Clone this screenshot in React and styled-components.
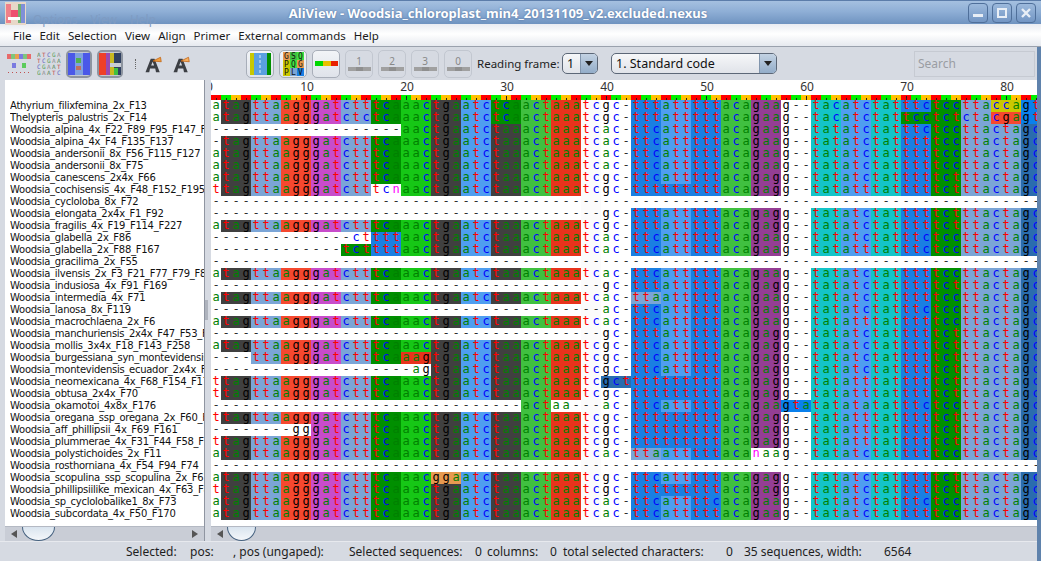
import React from "react";
import styled, { createGlobalStyle, css } from "styled-components";

const cellWidth = 10;
const rowHeight = 12;

const GlobalStyle = createGlobalStyle`
  html, body {
    margin: 0;
    padding: 0;
    width: 1041px;
    height: 561px;
    overflow: hidden;
    background: #d6dae2;
    font-family: "Noto Sans", sans-serif;
  }
`;

const aminoColors = {
  stop: "#404040",
  L: "#7ba5d6",
  R: "#f5482f",
  D: "#c84ccb",
  S: "#008f00",
  N: "#16c716",
  K: "#e8331c",
  G: "#e69a50",
  I: "#4f9ef0",
  T: "#40c040",
  F: "#1a7fe2",
  E: "#943e94",
  Y: "#14c4c8",
  P: "#cbc800",
  V: "#0a80ec",
  A: "#2a6cae"
};

const codonTable = {
  tag: "stop", tga: "stop", taa: "stop",
  tta: "L", cta: "L", ctt: "L", ctc: "L",
  agg: "R", cga: "R",
  gat: "D",
  tca: "S", tcc: "S", tct: "S",
  aac: "N",
  aag: "K", aaa: "K",
  gga: "G",
  atc: "I", att: "I", ata: "I",
  act: "T", aca: "T",
  ttt: "F", ttc: "F",
  gag: "E", gaa: "E",
  tac: "Y", tat: "Y",
  cca: "P",
  gta: "V",
  gct: "A"
};

const baseColors = {
  a: "#008000",
  t: "#ff0000",
  c: "#0000ff",
  g: "#000000",
  n: "#ff00ff",
  "-": "#303030"
};

const H = "tag tta agg gat ctt tca aac tga atc taa act aaa";
const dashes = n => "-".repeat(n);

const tailF = "ttc att ttt aca gaa g-- tat atc tat ttt tcc tta cta gct";
const tailG = "ttc att ttt aca gag g-- tat atc tat ttt tct tta cta gct";
const tailT = "ttt att ttt aca gag g-- tat atc tat ttt tct tta cta gct";
const tailU = "ttt ttt ttt aca gag g-- tat att tat ttt tct tta cta gct";

const rows = [
  ["Athyrium_filixfemina_2x_F13", "a" + "tag tta agg gat ctt tca aac tga atc tca act aaa" + "tcgc-" + "ttt att ttt aca gaa g-- tac atc tat ttc tcc tta cca gta"],
  ["Thelypteris_palustris_2x_F14", "a" + "tag tta agg gat ctc tca aac tga atc tca act aaa" + "tcgc-" + "ttt att ttt aca gaa g-- tac atc tat tcc tct cta cga gta"],
  ["Woodsia_alpina_4x_F22_F89_F95_F147_F205", dashes(19) + "aac tga atc taa act aaa" + "tcac-" + "ttc att ttt aca gaa g-- tat atc tat ttc tcc tta cta gct"],
  ["Woodsia_alpina_4x_F4_F135_F137", "-" + H + "tcac-" + tailF],
  ["Woodsia_andersonii_8x_F56_F115_F127", "a" + H + "tcac-" + tailF],
  ["Woodsia_andersonii_8x_F75", "a" + H + "tcac-" + tailF],
  ["Woodsia_canescens_2x4x_F66", "a" + H + "tcgc-" + tailG],
  ["Woodsia_cochisensis_4x_F48_F152_F195_F201", "t" + "tag tta agg gat ctt tcn aac tga atc taa act aaa" + "tcgc-" + tailU],
  ["Woodsia_cycloloba_8x_F72", dashes(84)],
  ["Woodsia_elongata_2x4x_F1_F92", dashes(39) + "gc-" + tailT],
  ["Woodsia_fragilis_4x_F19_F114_F227", "a" + H + "tcgc-" + tailT],
  ["Woodsia_glabella_2x_F86", dashes(14) + "ct" + "ttt aac tga atc taa act aaa" + "tcac-" + "ttc att ttt aca gaa g-- tat atc tat ttc tcc tta cta gct"],
  ["Woodsia_glabella_2x_F88_F167", dashes(13) + "tct ttt aac tga atc taa act aaa" + "tcac-" + "ttc att ttt aca gaa g-- tat att tat ttc tcc tta cta gct"],
  ["Woodsia_gracilima_2x_F55", dashes(84)],
  ["Woodsia_ilvensis_2x_F3_F21_F77_F79_F81", "a" + H + "tcac-" + tailF],
  ["Woodsia_indusiosa_4x_F91_F169", dashes(39) + "gc-" + tailT],
  ["Woodsia_intermedia_4x_F71", "a" + H + "tcac-" + "tta att ttt aca gaa g-- tat atc tat ttt tcc tta cta gct"],
  ["Woodsia_lanosa_8x_F119", dashes(39) + "ac-" + "ttc att ttt aca gaa g-- tat atc tat ttc tcc tta cta gct"],
  ["Woodsia_macrochlaena_2x_F6", "a" + H + "tcac-" + "ttc att ttt aca gaa g-- tat att tat ttt tcc tta cta gct"],
  ["Woodsia_manchuriensis_2x4x_F47_F53_F60", dashes(39) + "gc-" + tailT],
  ["Woodsia_mollis_3x4x_F18_F143_F258", "a" + H + "tcgc-" + tailG],
  ["Woodsia_burgessiana_syn_montevidensis_F3", "----" + "tta agg gat ctt tca aag tga atc taa act aaa" + "tcgc-" + tailG],
  ["Woodsia_montevidensis_ecuador_2x4x_F90", dashes(20) + "ag" + "tga atc taa act aaa" + "tcgc-" + tailG],
  ["Woodsia_neomexicana_4x_F68_F154_F171", "t" + H + "tcgct" + tailU],
  ["Woodsia_obtusa_2x4x_F70", "t" + H + "tcgc-" + tailU],
  ["Woodsia_okamotoi_4x8x_F176", dashes(31) + "act" + "aa---" + "ac-" + "ttc att ttt aca gaa gta tat ata tat ttc tcc tta cta gct"],
  ["Woodsia_oregana_ssp_oregana_2x_F60_F77", "t" + H + "tcgc-" + tailU],
  ["Woodsia_aff_phillipsii_4x_F69_F161", dashes(8) + "gg" + "gat ctt tca aac tga atc taa act aaa" + "tcgc-" + tailU],
  ["Woodsia_plummerae_4x_F31_F44_F58_F60", "t" + H + "tcgc-" + tailU],
  ["Woodsia_polystichoides_2x_F11", "a" + H + "tcac-" + "tta att ttt aca naa g-- tat atc tat ttt tcc tta cta gct"],
  ["Woodsia_rosthorniana_4x_F54_F94_F74", dashes(84)],
  ["Woodsia_scopulina_ssp_scopulina_2x_F61", "a" + "tag tta agg gat ctt tca aac gga atc taa act aaa" + "tcgc-" + tailG],
  ["Woodsia_phillipsiilike_mexican_4x_F63_F80", "t" + H + "tcgc-" + "ttt ttt ttt aca gag g-- tat atc tat ttt tct tta cta gct"],
  ["Woodsia_sp_cyclolobalike1_8x_F73", "a" + H + "tcac-" + "ttc att ttc aca gaa g-- tat atc tat ttc tcc tta cta gct"],
  ["Woodsia_subcordata_4x_F50_F170", "a" + H + "tcac-" + tailF]
];

// column groups: col 0 alone, codons, two loose columns, then the rest in codons
const splitColumns = seq => {
  const s = seq.replace(/ /g, "");
  const groups = [[s[0], false]];
  for (let i = 1; i < 37; i += 3) groups.push([s.slice(i, i + 3), true]);
  groups.push([s[37], false, true]);
  groups.push([s[38], false, true]);
  groups.push([s.slice(39, 42), true]);
  for (let i = 42; i < 84; i += 3) groups.push([s.slice(i, i + 3), true]);
  return groups;
};

const rulerColors = ["#ff0000", "#00ee00", "#ffc000"];

const Window = styled.div`
  width: 1041px;
  height: 561px;
  display: flex;
  flex-direction: column;
  overflow: hidden;
  background: #d6dae2;
  position: relative;
`;

const TitleBar = styled.div`
  height: 24px;
  flex: none;
  position: relative;
  display: flex;
  align-items: center;
  justify-content: center;
  background: linear-gradient(#a5c0e0, #8fafd6 45%, #6f93c0);
  border-top: 1px solid #5c7daa;
  box-sizing: border-box;
  color: #fff;
  font-weight: bold;
  font-size: 13px;
  padding-right: 45px;
  text-shadow: 0 0 2px #4a6a96;
`;

const AppIcon = styled.svg`
  position: absolute;
  left: 5px;
  top: 1px;
  width: 21px;
  height: 23px;
`;

const GhostMenu = styled.div`
  position: absolute;
  left: 33px;
  top: 10px;
  display: flex;
  gap: 13px;
  font-size: 12px;
  font-weight: normal;
  color: #7e9bc2;
  text-shadow: none;
`;

const WindowButtons = styled.div`
  position: absolute;
  right: 5px;
  top: 2px;
  display: flex;
  gap: 4px;
`;

const WindowButton = styled.div`
  width: 18px;
  height: 18px;
  border: 1px solid #4f6f9a;
  border-radius: 4px;
  background: linear-gradient(#9cb9dc, #7396c4);
  display: flex;
  align-items: center;
  justify-content: center;
`;

const Body = styled.div`
  flex: 1;
  display: flex;
  flex-direction: column;
  min-height: 0;
  padding: 0 4px 0 0;
  background: linear-gradient(90deg, #d6dae2 1037px, #5f82ac 1037px);
`;

const MenuBar = styled.div`
  height: 23px;
  flex: none;
  box-sizing: border-box;
  display: flex;
  align-items: center;
  padding-left: 13px;
  gap: 8px;
  margin-right: -4px;
  background: linear-gradient(#e9ecf2, #ffffff 45%, #e6e9ef);
  border-bottom: 1px solid #9aa1ad;
  font-size: 11.5px;
  color: #1a1a1a;
`;

const ToolBar = styled.div`
  height: 33px;
  flex: none;
  display: flex;
  align-items: center;
  padding-left: 7px;
`;

const PlainIcon = styled.svg`
  width: ${p => p.$size || 24}px;
  height: ${p => p.$size || 24}px;
  margin-right: ${p => p.$gap || 5}px;
  flex: none;
`;

const buttonFace = css`
  box-sizing: border-box;
  border-radius: 5px;
  border: 1px solid #a8aeb9;
  background: linear-gradient(#f2f4f7, #dfe3ea);
`;

const ToolButton = styled.div`
  ${buttonFace}
  width: ${p => p.$w || 27}px;
  height: 28px;
  flex: none;
  margin-right: ${p => p.$gap || 5}px;
  display: flex;
  align-items: center;
  justify-content: center;
  ${p => p.$dim && css`
    background: #d6dae2;
    border-color: #c2c7d0;
  `}
  ${p => p.$on && css`
    border: 2px solid #8d949f;
    background: #c3c8d2;
    width: 26px;
  `}
`;

const Divider = styled.div`
  width: 2px;
  height: 10px;
  margin: 0 6px 0 7px;
  border-left: 1px dotted #666;
`;

const FrameNum = styled.div`
  display: flex;
  flex-direction: column;
  align-items: center;
  color: #888;
  font-size: 10px;
  line-height: 9px;
  width: 100%;
  &::after {
    content: "";
    display: block;
    width: 23px;
    height: 4px;
    margin-top: 1px;
    background: linear-gradient(90deg, #a0a0a0 34%, #8f8f8f 34%, #8f8f8f 66%, #a0a0a0 66%);
  }
`;

const FieldLabel = styled.div`
  font-size: 11.5px;
  color: #1e1e1e;
  width: 85px;
  flex: none;
  white-space: nowrap;
`;

const Combo = styled.div`
  box-sizing: border-box;
  width: ${p => p.$w}px;
  height: 21px;
  flex: none;
  margin-right: ${p => p.$gap}px;
  border: 1px solid #5c6777;
  border-radius: 5px;
  background: linear-gradient(#f6f7f9, #e0e3e9);
  display: flex;
  align-items: center;
  font-size: 12.5px;
  color: #111;
  padding-left: 4px;
  overflow: hidden;
`;

const ComboText = styled.div`
  flex: 1;
  white-space: nowrap;
`;

const ComboArrow = styled.div`
  width: 16px;
  height: 100%;
  flex: none;
  background: linear-gradient(#c3d2e3, #93adc9);
  border-left: 1px solid #8195ad;
  display: flex;
  align-items: center;
  justify-content: center;
  &::after {
    content: "";
    border-left: 4px solid transparent;
    border-right: 4px solid transparent;
    border-top: 5px solid #222;
  }
`;

const SearchBox = styled.div`
  box-sizing: border-box;
  width: 121px;
  height: 26px;
  flex: none;
  border: 1px solid #c6cad2;
  background: #d6dae2;
  color: #9a9da3;
  font-size: 12px;
  padding: 3px 3px;
`;

const Panes = styled.div`
  flex: 1;
  min-height: 0;
  display: flex;
  padding-left: 5px;
`;

const NamePane = styled.div`
  width: 199px;
  flex: none;
  display: flex;
  flex-direction: column;
  border-right: 1px solid #8f95a1;
`;

const Names = styled.div`
  flex: 1;
  min-height: 0;
  background: #fff;
  padding: 20px 0 0 5px;
  overflow: hidden;
`;

const NameRow = styled.div`
  height: ${rowHeight}px;
  line-height: ${rowHeight}px;
  font-family: "DejaVu Sans", sans-serif;
  font-size: 10px;
  letter-spacing: -0.27px;
  color: #111;
  white-space: nowrap;
  overflow: hidden;
`;

const Splitter = styled.div`
  width: 6px;
  flex: none;
  background: #d6dae2;
  position: relative;
  &::after {
    content: "";
    position: absolute;
    left: 0;
    top: 220px;
    width: 3px;
    height: 20px;
    background: #aeb3bd;
  }
`;

const AlignPane = styled.div`
  flex: 1;
  min-width: 0;
  display: flex;
  flex-direction: column;
  border-left: 0;
`;

const Ruler = styled.div`
  height: 20px;
  flex: none;
  background: #fff;
  display: flex;
  flex-direction: column;
  overflow: hidden;
`;

const RulerLabels = styled.div`
  height: 15px;
  display: flex;
  font-size: 12px;
  line-height: 14px;
  color: #333;
`;

const RulerLabel = styled.div`
  width: ${p => p.$w}px;
  flex: none;
  text-align: ${p => p.$align || "center"};
  margin-left: ${p => p.$ml || 0}px;
`;

const Ticks = styled.div`
  height: 5px;
  display: flex;
`;

const Tick = styled.div`
  width: ${cellWidth}px;
  flex: none;
  height: 5px;
  position: relative;
  &::after {
    content: "";
    position: absolute;
    left: 5px;
    bottom: 0;
    width: 1px;
    height: ${p => (p.$major ? 4 : 2)}px;
    background: #222;
  }
`;

const Grid = styled.div`
  flex: 1;
  min-height: 0;
  background: #fff;
  overflow: hidden;
`;

const SeqRow = styled.div`
  height: ${rowHeight}px;
  display: flex;
`;

const Codon = styled.div`
  display: flex;
  flex: none;
  height: ${rowHeight}px;
  background: ${p => p.$bg};
`;

const Base = styled.span`
  width: ${cellWidth}px;
  flex: none;
  height: ${rowHeight}px;
  line-height: 11px;
  text-align: center;
  font-family: "DejaVu Sans Mono", monospace;
  font-size: 12px;
  color: ${p => baseColors[p.$c]};
`;

const Scroller = styled.div`
  height: 15px;
  flex: none;
  position: relative;
  overflow: hidden;
  background: #c9cdd6;
  border-top: 1px solid #b4b9c3;
  box-sizing: border-box;
  display: flex;
  align-items: center;
  justify-content: space-between;
  padding: 0 6px;
`;

const Arrow = styled.div`
  width: 0;
  height: 0;
  border-top: 4px solid transparent;
  border-bottom: 4px solid transparent;
  ${p => (p.$right ? "border-left: 6px solid #555;" : "border-right: 6px solid #555;")}
`;

const Thumb = styled.div`
  position: absolute;
  left: ${p => p.$left}px;
  top: -14px;
  width: ${p => p.$w}px;
  height: 28px;
  box-sizing: border-box;
  border: 1px solid #45617f;
  border-radius: 50%;
  background: linear-gradient(#b9cde0, #dfe8f1 60%, #f4f7fa);
`;

const StatusBar = styled.div`
  height: 19px;
  flex: none;
  display: flex;
  align-items: center;
  padding-left: 126px;
  font-size: 12px;
  color: #1e1e1e;
  white-space: nowrap;
  border-top: 1px solid #e7e9ee;
`;

const StatusItem = styled.div`
  width: ${p => p.$w}px;
  flex: none;
`;

const ViewIconOne = () => (
  <PlainIcon viewBox="0 0 24 24" $gap={6}>
    {[0, 4, 8, 12, 16, 20].map((x, i) => (
      <rect key={x} x={x} y="2" width="4" height="5" fill={["#e86a6a", "#7dc67d", "#e8a050", "#7a7ae0", "#7dc67d", "#e86a6a"][i]} />
    ))}
    <rect x="5" y="11" width="4" height="5" fill="#7a7ae0" />
    <rect x="15" y="11" width="4" height="5" fill="#5ccb5c" />
    {[1, 5, 9, 13, 17, 21].map(x => (
      <rect key={x} x={x} y="20" width="1" height="1" fill="#c05050" />
    ))}
  </PlainIcon>
);

const ViewIconTwo = () => (
  <PlainIcon viewBox="0 0 24 24" $gap={5}>
    {[2, 8, 14, 20].map((y, r) =>
      [0, 5, 10, 15, 20].map((x, i) => (
        <text key={x + "-" + y} x={x} y={y + 3} fontSize="6" fontFamily="DejaVu Sans Mono" fill={["#5a8a5a", "#c05050", "#6060c0", "#5aa05a", "#909090"][(i + r) % 5]}>
          {"ATCGA"[(i + r) % 5]}
        </text>
      ))
    )}
  </PlainIcon>
);

const ViewIconBlue = () => (
  <svg width="22" height="22" viewBox="0 0 22 22">
    <rect width="22" height="22" fill="#4a58e8" />
    <rect x="7" width="8" height="22" fill="#7fa0e0" />
    <rect x="8" y="5" width="5" height="5" fill="#52b052" />
    <rect x="8" y="13" width="5" height="4" fill="#c07060" />
  </svg>
);

const ViewIconRed = () => (
  <svg width="22" height="22" viewBox="0 0 22 22">
    <rect width="7" height="22" fill="#ee4028" />
    <rect x="7" width="4" height="22" fill="#9a48b0" />
    <rect x="11" width="4" height="22" fill="#c8b820" />
    <rect x="15" width="7" height="22" fill="#304060" />
    <rect x="11" y="10" width="11" height="4" fill="#c8ccd4" />
    <rect x="15" y="15" width="4" height="7" fill="#40c040" />
  </svg>
);

const FontIcon = ({ fill, gap }) => (
  <PlainIcon viewBox="0 0 24 24" $gap={gap} $size={18}>
    <path d="M2 23 L9 5 L14 5 L21 23 L16 23 L15 18 L8 18 L7 23 Z M9.5 14 L13.5 14 L11.5 9 Z" fill="#3c3f44" fillRule="evenodd" />
    <path d="M12 8 L22 3 L23 9 Z" fill={fill} stroke="#c06010" strokeWidth="1" />
  </PlainIcon>
);

const ColumnIcon = () => (
  <svg width="21" height="22" viewBox="0 0 21 22">
    <rect width="4" height="22" fill="#c8c800" />
    <rect x="4" width="13" height="22" fill="#5aa0e0" />
    <rect x="17" width="4" height="22" fill="#008f00" />
    <path d="M10 2v18" stroke="#ddeeff" strokeWidth="1" strokeDasharray="3 2" />
  </svg>
);

const AminoIcon = () => (
  <svg width="21" height="24" viewBox="0 0 21 24">
    {[
      ["G", "#e69a50"], ["S", "#40c040"], ["Q", "#40e040"],
      ["P", "#cbc800"], ["Q", "#40e040"], ["G", "#e69a50"],
      ["P", "#cbc800"], ["L", "#7ba5d6"], ["V", "#1a7fe2"]
    ].map(([t, f], i) => (
      <g key={i}>
        <rect x={(i % 3) * 7} y={Math.floor(i / 3) * 8} width="7" height="8" fill={f} />
        <text x={(i % 3) * 7 + 1} y={Math.floor(i / 3) * 8 + 7} fontSize="8" fontFamily="DejaVu Sans Mono" fill="#111">{t}</text>
      </g>
    ))}
  </svg>
);

const TranslateIcon = () => (
  <svg width="23" height="6" viewBox="0 0 23 6">
    <rect width="8" height="5" fill="#00d800" />
    <rect x="8" width="8" height="5" fill="#e8c000" />
    <rect x="16" width="7" height="5" fill="#e82000" />
  </svg>
);

export default function App() {
  const ticks = [];
  for (let i = 0; i < 83; i++) ticks.push(i);

  return (
    <Window>
      <GlobalStyle />
      <TitleBar>
        <AppIcon viewBox="0 0 21 23">
          <rect width="21" height="23" fill="#e8d8c8" />
          <rect x="1" y="2" width="5" height="19" fill="#f08088" />
          <rect x="6" y="8" width="7" height="7" fill="#ee5070" />
          <rect x="13" y="2" width="3" height="19" fill="#70b070" />
          <rect x="16" y="2" width="4" height="19" fill="#8090d8" />
          <rect x="3" y="15" width="12" height="3" fill="#fff" />
        </AppIcon>
        <GhostMenu>
          <span>Options</span>
          <span>View</span>
          <span>Help</span>
        </GhostMenu>
        AliView - Woodsia_chloroplast_min4_20131109_v2.excluded.nexus
        <WindowButtons>
          <WindowButton>
            <svg width="10" height="10" viewBox="0 0 10 10"><rect y="6" width="10" height="3" fill="#e8eef6" /></svg>
          </WindowButton>
          <WindowButton>
            <svg width="10" height="10" viewBox="0 0 10 10"><rect x="1" y="1" width="8" height="8" fill="none" stroke="#e8eef6" strokeWidth="2" /></svg>
          </WindowButton>
          <WindowButton>
            <svg width="10" height="10" viewBox="0 0 10 10"><path d="M1 1 L9 9 M9 1 L1 9" stroke="#e8eef6" strokeWidth="2.4" /></svg>
          </WindowButton>
        </WindowButtons>
      </TitleBar>
      <Body>
        <MenuBar>
          {["File", "Edit", "Selection", "View", "Align", "Primer", "External commands", "Help"].map(m => (
            <span key={m}>{m}</span>
          ))}
        </MenuBar>
        <ToolBar>
          <ViewIconOne />
          <ViewIconTwo />
          <ToolButton $on $gap={5}><ViewIconBlue /></ToolButton>
          <ToolButton $on $gap={0}><ViewIconRed /></ToolButton>
          <Divider />
          <FontIcon fill="#f0a040" gap={10} />
          <FontIcon fill="#f8b060" gap={56} />
          <ToolButton $w={28}><ColumnIcon /></ToolButton>
          <ToolButton $w={28}><AminoIcon /></ToolButton>
          <ToolButton $w={28}><TranslateIcon /></ToolButton>
          {["1", "2", "3", "0"].map(n => (
            <ToolButton key={n} $w={28} $dim><FrameNum>{n}</FrameNum></ToolButton>
          ))}
          <FieldLabel>Reading frame:</FieldLabel>
          <Combo $w={36} $gap={13}>
            <ComboText>1</ComboText>
            <ComboArrow />
          </Combo>
          <Combo $w={166} $gap={137}>
            <ComboText>1. Standard code</ComboText>
            <ComboArrow />
          </Combo>
          <SearchBox>Search</SearchBox>
        </ToolBar>
        <Panes>
          <NamePane>
            <Names>
              {rows.map(r => (
                <NameRow key={r[0]}>{r[0]}</NameRow>
              ))}
            </Names>
            <Scroller>
              <Arrow />
              <Thumb $left={17} $w={33} />
              <Arrow $right />
            </Scroller>
          </NamePane>
          <Splitter />
          <AlignPane>
            <Ruler>
              <RulerLabels>
                <RulerLabel $w={51} $align="left" $ml={-5}>0</RulerLabel>
                {[10, 20, 30, 40, 50, 60, 70, 80].map(n => (
                  <RulerLabel key={n} $w={100}>{n}</RulerLabel>
                ))}
              </RulerLabels>
              <Ticks>
                {ticks.map(i => (
                  <Tick key={i} $major={(i + 1) % 10 === 0} style={{ background: rulerColors[i % 3] }} />
                ))}
              </Ticks>
            </Ruler>
            <Grid>
              {rows.map(r => (
                <SeqRow key={r[0]}>
                  {splitColumns(r[1]).map(([text, isCodon, loose], i) => {
                    const amino = isCodon ? codonTable[text] : null;
                    const bg = amino ? aminoColors[amino] : loose ? "#fbfbfb" : "#fff";
                    return (
                      <Codon key={i} $bg={bg}>
                        {text.split("").map((c, j) => (
                          <Base key={j} $c={c}>{c}</Base>
                        ))}
                      </Codon>
                    );
                  })}
                </SeqRow>
              ))}
            </Grid>
            <Scroller>
              <Arrow />
              <Thumb $left={16} $w={29} />
            </Scroller>
          </AlignPane>
        </Panes>
        <StatusBar>
          <StatusItem $w={64}>Selected:</StatusItem>
          <StatusItem $w={43}>pos:</StatusItem>
          <StatusItem $w={116}>, pos (ungaped):</StatusItem>
          <StatusItem $w={126}>Selected sequences:</StatusItem>
          <StatusItem $w={12}>0</StatusItem>
          <StatusItem $w={63}>columns:</StatusItem>
          <StatusItem $w={13}>0</StatusItem>
          <StatusItem $w={163}>total selected characters:</StatusItem>
          <StatusItem $w={18}>0</StatusItem>
          <StatusItem $w={140}>35 sequences, width:</StatusItem>
          <StatusItem $w={40}>6564</StatusItem>
        </StatusBar>
      </Body>
    </Window>
  );
}
